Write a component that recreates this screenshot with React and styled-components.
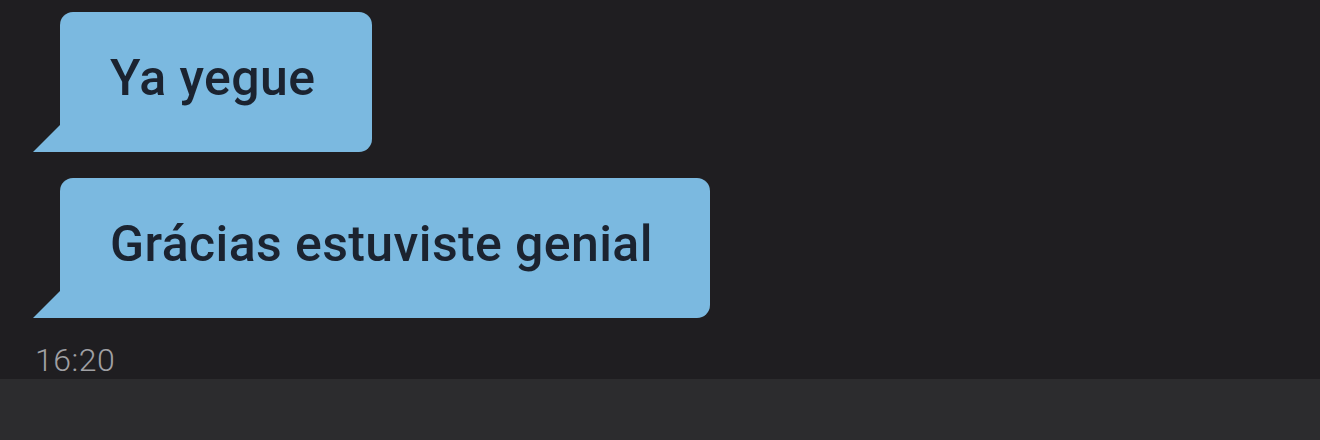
import React from "react";
import styled, { createGlobalStyle } from "styled-components";

const Global = createGlobalStyle`
  html, body { margin: 0; padding: 0; background: #1f1e21; }
  body { font-family: Roboto, "DejaVu Sans", sans-serif; }
`;

const Screen = styled.div`
  width: 1320px;
  height: 440px;
  display: flex;
  flex-direction: column;
  background: #1f1e21;
  overflow: hidden;
`;

const Thread = styled.div`
  flex: 1;
  min-height: 0;
  display: flex;
  flex-direction: column;
  align-items: flex-start;
  gap: 26px;
  padding: 12px 0 0 60px;
`;

const Bubble = styled.div`
  position: relative;
  box-sizing: border-box;
  height: 140px;
  display: flex;
  align-items: center;
  padding: 0 57px 8px 50px;
  background: #7bb9e0;
  color: #1b2330;
  border-radius: 13px 13px 13px 0;
  font-size: 50px;
  font-weight: 500;
  letter-spacing: 0.4px;

  &::before {
    content: "";
    position: absolute;
    left: -27px;
    bottom: 0;
    width: 28px;
    height: 28px;
    background: #7bb9e0;
    clip-path: polygon(100% 0, 100% 100%, 0 100%);
  }
`;

const Time = styled.div`
  margin-left: -25px;
  font-size: 32px;
  line-height: 32px;
  font-weight: 300;
  color: #a0a0a4;
  letter-spacing: 0.5px;
`;

const InputBar = styled.div`
  height: 61px;
  background: #2c2c2e;
  flex-shrink: 0;
`;

export default function App() {
  return (
    <>
      <Global />
      <Screen>
        <Thread>
          <Bubble>Ya yegue</Bubble>
          <Bubble>Grácias estuviste genial</Bubble>
          <Time>16:20</Time>
        </Thread>
        <InputBar />
      </Screen>
    </>
  );
}
